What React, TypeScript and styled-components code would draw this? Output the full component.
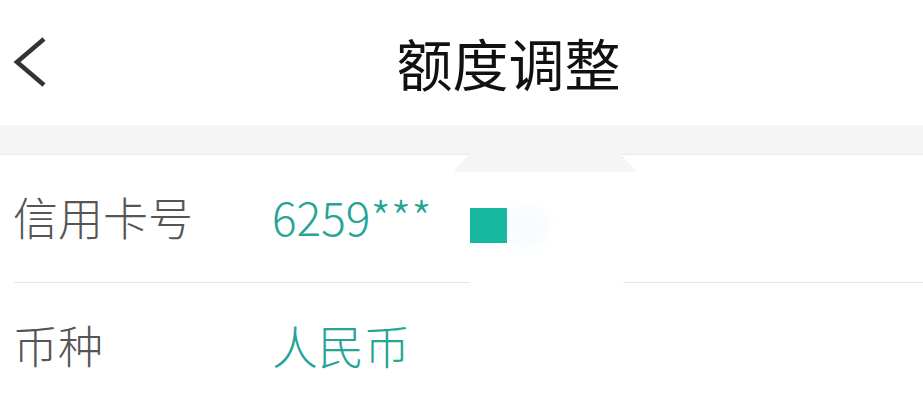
import React from "react";
import styled, { createGlobalStyle } from "styled-components";

const Global = createGlobalStyle`
  html, body {
    margin: 0;
    padding: 0;
    background: #ffffff;
  }
  body {
    font-family: "Noto Sans CJK SC", "Noto Sans", sans-serif;
  }
`;

const Page = styled.div`
    width: 923px;
    height: 408px;
    overflow: hidden;
    background: #fff;
    position: relative;
  `,
  Header = styled.div`
    height: 125px;
    display: flex;
    align-items: center;
    padding-left: 12px;
    box-sizing: border-box;
  `,
  Back = styled.div`
    width: 34px;
    height: 50px;
    display: flex;
    align-items: center;
    margin-top: -2px;
  `,
  Title = styled.div`
    flex: 1;
    text-align: center;
    padding-left: 48px;
    font-size: 56px;
    line-height: 1;
    color: #111;
    margin-top: -2px;
  `,
  Band = styled.div`
    height: 29px;
    background: #f5f5f5;
    border-bottom: 1px solid #e9e9e9;
  `,
  List = styled.div`
    position: relative;
  `,
  Row = styled.div<{ $divider?: boolean }>`
    height: 128px;
    display: flex;
    align-items: center;
    padding-left: 13px;
    position: relative;
    &::after {
      content: "";
      display: ${({ $divider }) => ($divider ? "block" : "none")};
      position: absolute;
      left: 14px;
      right: 0;
      bottom: 0;
      height: 1px;
      background: #e6e6e6;
    }
  `,
  Label = styled.div`
    width: 259px;
    font-size: 45px;
    font-weight: 300;
    color: #555;
    line-height: 1;
    margin-top: -6px;
  `,
  Value = styled.div`
    font-size: 46px;
    font-weight: 300;
    color: #26a597;
    line-height: 1;
    margin-top: -6px;
  `,
  Patch = styled.div`
    position: absolute;
    left: 453px;
    top: -1px;
    width: 184px;
    height: 18px;
    background: #f5f5f5;
    clip-path: polygon(9% 0, 91% 0, 100% 100%, 0 100%);
  `,
  Erase = styled.div`
    position: absolute;
    left: 470px;
    top: 126px;
    width: 153px;
    height: 3px;
    background: #fff;
  `,
  Square = styled.div`
    position: absolute;
    left: 470px;
    top: 53px;
    width: 37px;
    height: 35px;
    background: #17b89f;
  `,
  Blur = styled.div`
    position: absolute;
    left: 505px;
    top: 50px;
    width: 44px;
    height: 42px;
    background: #f7fcff;
    border-radius: 16px;
    filter: blur(6px);
  `;

const Chevron = () => (
  <svg width="34" height="50" viewBox="0 0 34 50">
    <polyline
      points="32,2 5,25 32,48"
      fill="none"
      stroke="#333"
      strokeWidth="4.5"
    />
  </svg>
);

const App = () => (
  <Page>
    <Global />
    <Header>
      <Back>
        <Chevron />
      </Back>
      <Title>额度调整</Title>
    </Header>
    <Band />
    <List>
      <Row $divider>
        <Label>信用卡号</Label>
        <Value>6259***</Value>
      </Row>
      <Row>
        <Label>币种</Label>
        <Value>人民币</Value>
      </Row>
      <Patch />
      <Erase />
      <Blur />
      <Square />
    </List>
  </Page>
);

export default App;
